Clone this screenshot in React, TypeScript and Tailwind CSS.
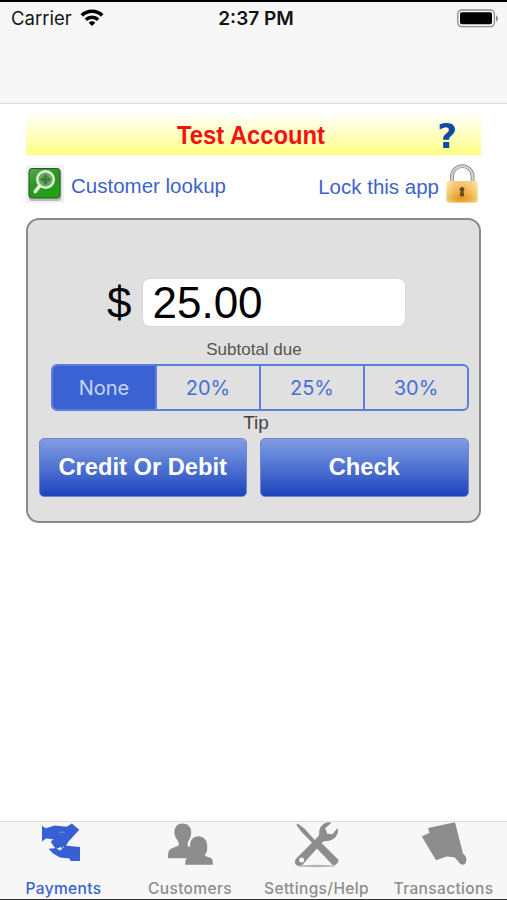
import { useState, type ReactNode } from "react";

const tips = ["None", "20%", "25%", "30%"];

function WifiIcon() {
  return (
    <svg width="24" height="18" viewBox="0 0 24 18" fill="none" stroke="#000" strokeWidth="3.6">
      <path d="M1.8 6.4a14.6 14.6 0 0 1 20.4 0" />
      <path d="M5.9 10.7a8.8 8.8 0 0 1 12.2 0" />
      <path d="M12 17l-3.300-3.300a4.700 4.700 0 0 1 6.600 0z" fill="#000" stroke="none" />
    </svg>
  );
}

function BatteryIcon() {
  return (
    <svg width="42" height="19" viewBox="0 0 42 19">
      <rect x="0.8" y="1" width="36.6" height="16.6" rx="4" fill="#f7f7f7" stroke="#8b8b8b" strokeWidth="1.3" />
      <rect x="3" y="3.3" width="32" height="12" rx="1.8" fill="#000" />
      <path d="M39 6.2c2.600 1 2.600 5.200 0 6.200z" fill="#8b8b8b" />
    </svg>
  );
}

function LookupIcon() {
  return (
    <svg width="38" height="38" viewBox="0 0 38 38">
      <defs>
        <linearGradient id="lookup" x1="0" y1="0" x2="0.6" y2="1">
          <stop offset="0" stopColor="#5aa94c" />
          <stop offset="0.5" stopColor="#2f9227" />
          <stop offset="1" stopColor="#23a312" />
        </linearGradient>
      </defs>
      <rect width="38" height="38" fill="#f1f1f1" />
      <rect x="2.5" y="4" width="33" height="32" rx="4" fill="#9a9a9a" opacity="0.6" />
      <rect x="3" y="3.5" width="31" height="29.5" rx="3" fill="url(#lookup)" stroke="#1f5f1c" />
      <circle cx="19.5" cy="14.5" r="8.3" fill="#6aaa62" stroke="#dcf0d4" strokeWidth="2.4" />
      <path d="M19.5 9.5v10M14.5 14.5h10" stroke="#35752f" strokeWidth="2" />
      <circle cx="19.5" cy="14.5" r="3.4" fill="none" stroke="#35752f" strokeWidth="0.8" />
      <path d="M13.5 21l-4.200 5.500" stroke="#e4f4dc" strokeWidth="3.6" strokeLinecap="round" />
    </svg>
  );
}

function LockIcon() {
  return (
    <svg width="32" height="40" viewBox="0 0 32 40">
      <defs>
        <linearGradient id="lockBody" x1="0" y1="0" x2="0" y2="1">
          <stop offset="0" stopColor="#fbe3a0" />
          <stop offset="0.5" stopColor="#f3bb4d" />
          <stop offset="0.8" stopColor="#e59a22" />
          <stop offset="1" stopColor="#f6b740" />
        </linearGradient>
        <linearGradient id="lockSide" x1="0" y1="0" x2="1" y2="0">
          <stop offset="0" stopColor="#fff3c8" stopOpacity="0.5" />
          <stop offset="0.45" stopColor="#e08a20" stopOpacity="0.25" />
          <stop offset="1" stopColor="#fff0b0" stopOpacity="0.6" />
        </linearGradient>
      </defs>
      <path d="M6 20V12.500a10.300 10.300 0 0 1 20.600 0V20" fill="none" stroke="#8f8f8f" strokeWidth="3.8" />
      <path d="M6 20V12.500a10.300 10.300 0 0 1 20.600 0V20" fill="none" stroke="#d2d2d2" strokeWidth="2" />
      <rect x="0.5" y="17" width="31" height="21.5" rx="2.5" fill="url(#lockBody)" />
      <rect x="0.5" y="17" width="31" height="21.5" rx="2.5" fill="url(#lockSide)" />
      <path d="M16 23a2.400 2.400 0 0 1 1.500 4.300l.8 5h-4.600l.8-5a2.400 2.400 0 0 1 1.500-4.300z" fill="#6b4a20" />
    </svg>
  );
}

function PaymentsIcon() {
  return (
    <svg width="40" height="40" viewBox="0 0 40 40" fill="currentColor">
      <path d="M1 2.800L4.800 5.300 14 2.400 25.700 3.700 30.800.6 38.300 6.800 27.500 18.500 25 22.500 31 23.200 39 24V38H29.700L28.500 35.500 19 34.500 12 30.500 7.600 25.700 14.200 25.200 9.700 18.700 12.300 16.300 5 15.600 1 18.400z" />
      <path d="M15.300 25.800l4.700-1.700 1.200 1.800-2.500 1.500-1.200-.9zM21.500 23.500l1.500.3-.5 1.400z" fill="#f7f7f7" />
      <path d="M18 10.500l3-1.500 2.500.4" fill="none" stroke="#86a0e6" strokeWidth="0.8" />
    </svg>
  );
}

function CustomersIcon() {
  return (
    <svg width="46" height="43" viewBox="0 0 46 43" fill="currentColor">
      <path d="M15.500.5c5 0 8.900 3.400 8.700 9 0 5-2.600 8-3.500 10v3.400l8 3.600v8.700H1c0-5 .4-7.800 2.500-9.200l8.200-3.500v-3.300C9 15.500 7.400 13 7.400 9c0-5.200 3.400-8.500 8.100-8.500z" />
      <path d="M31.200 13.200c5.500 0 9 4 9 9.300 0 4.500.2 6-1.400 8.200l-1.200 2 6 2.200c1.700.8 2.400 3 2.400 6.800H18.200c0-3.500.3-5.700 2.200-6.600l4.600-2.300-1.400-2.500c0-2-.6-3.800-.6-7.800 0-5.300 3.200-9.300 8.200-9.300z" />
    </svg>
  );
}

function SettingsIcon() {
  return (
    <svg width="44" height="46" viewBox="0 0 44 46">
      <path d="M1.300 2.700L2.600 1.500l7 5.300L20.600 19l-2.600 2.700L6.200 9.600z" fill="currentColor" />
      <path d="M20 24.500l5-5 18.200 18c1.500 2.200-3.200 7-5.600 5.500z" fill="currentColor" />
      <path d="M36.500.7c-4.800-2-12 2-12.300 9.300.1 2.200-.1 3.400-1 4.500L1 36.800c-3.300 4.300 1.700 9.700 6.300 6.200L27 20.800c1.500-1.400 3-1.900 5-1.700 7.300-.2 12.300-6.800 10.500-13.100l-5 6.200-5.300-.4-2-5.500z" fill="currentColor" />
      <circle cx="6.6" cy="38" r="2.5" fill="#f7f7f7" />
      <ellipse cx="22" cy="44" rx="19" ry="1.2" fill="#b5b5b5" />
    </svg>
  );
}

function TransactionsIcon() {
  return (
    <svg width="46" height="45" viewBox="0 0 46 45" fill="currentColor">
      <path d="M7 6L34 .3l8 31.200c3.500 3.300 4 5 3 8.300-.8 3-3.500 4-6.300 1.500l-5.200-6-8-.8-10.500 3.800L.8 14.600l7.700-3.900z" />
    </svg>
  );
}

type TabProps = { label: string; icon: ReactNode; active?: boolean; className: string; offset: string };

function Tab({ label, icon, active, className, offset }: TabProps) {
  return (
    <button
      type="button"
      className={`flex shrink-0 flex-col items-center ${className} ${active ? "text-[#3761d3]" : "text-[#8d8d8d]"}`}
    >
      <span className={`flex h-[57px] ${offset}`}>{icon}</span>
      <span className="font-[Inter,sans-serif] text-[15.5px] leading-5 font-medium tracking-[0.35px] whitespace-nowrap">
        {label}
      </span>
    </button>
  );
}

const payButton =
  "h-[59px] rounded-[5px] border border-[#6f86c8] bg-linear-to-b from-[#839de3] to-[#1f43bd] text-[23.7px] font-bold text-white";

export default function App() {
  const [tip, setTip] = useState("None");
  const [amount, setAmount] = useState("25.00");

  return (
    <div className="flex h-[900px] w-[507px] flex-col overflow-hidden border-t-2 border-b border-black border-b-[#333] bg-white font-['Liberation_Sans',Arial,sans-serif]">
      <header className="h-[102px] shrink-0 border-b border-[#dcdcdc] bg-[#f7f7f7]">
        <div className="grid h-8 grid-cols-[1fr_auto_1fr] items-center pr-2 pl-[11px] font-[Inter,sans-serif] text-[18.5px] text-[#111]">
          <div className="flex items-center gap-[8px]">
            <span className="pt-[2px]">Carrier</span>
            <WifiIcon />
          </div>
          <span className="pt-[2px] pl-[2px] text-[19px] font-semibold">2:37 PM</span>
          <div className="flex justify-end">
            <BatteryIcon />
          </div>
        </div>
      </header>

      <main className="flex flex-1 flex-col px-[26px] pt-[9px]">
        <div className="flex h-[42px] items-center bg-linear-to-b from-[#fffffa] to-[#ffff80] pr-[24px] pl-[151px]">
          <h1 className="w-[148px] origin-left scale-x-[0.915] pt-[2px] text-[26px] font-bold whitespace-nowrap text-[#f31212]">
            Test Account
          </h1>
          <button
            type="button"
            className="ml-auto origin-right pt-[5px] font-['DejaVu_Sans',sans-serif] text-[34px] leading-[37px] font-bold text-[#0b4ba3]"
          >
            ?
          </button>
        </div>

        <div className="mt-[9px] flex h-[40px] items-center text-[20.5px] text-[#3f62c9]">
          <LookupIcon />
          <span className="ml-[7px] pt-[4px]">Customer lookup</span>
          <span className="mr-[7px] ml-auto pt-[6px]">Lock this app</span>
          <LockIcon />
          <span className="w-[3px]" />
        </div>

        <section className="mt-[14px] flex h-[305px] flex-col items-center rounded-[13px] border-2 border-[#8a8a8a] bg-[#e0e0e0]">
          <div className="mt-[58px] flex w-full items-center pl-[79px] text-[44px] leading-[48px] text-black">
            <span>$</span>
            <input
              value={amount}
              onChange={(e) => setAmount(e.target.value)}
              className="ml-[11px] h-[49px] w-[264px] rounded-[8px] border border-[#d8d8d8] bg-white pl-[9px] outline-none"
            />
          </div>
          <p className="mt-[13px] pl-[1px] text-[17px] leading-5 text-[#555]">Subtotal due</p>
          <div className="mt-[4px] ml-[13px] flex h-[47px] w-[418px] divide-x-2 divide-[#5c7dd8] overflow-hidden rounded-[6px] border-2 border-[#5c7dd8] font-[Inter,sans-serif] text-[20px]">
            {tips.map((t) => (
              <button
                key={t}
                type="button"
                onClick={() => setTip(t)}
                className={`flex-1 ${t === tip ? "bg-[#3a62d3] text-[#c9d5f5]" : "text-[#4a6fd4]"}`}
              >
                {t}
              </button>
            ))}
          </div>
          <p className="mt-[1px] pl-[5px] text-[19px] leading-[22px] text-[#444]">Tip</p>
          <div className="mt-[4px] grid w-[430px] grid-cols-2 gap-[13px]">
            <button type="button" className={payButton}>Credit Or Debit</button>
            <button type="button" className={payButton}>Check</button>
          </div>
        </section>
      </main>

      <nav className="flex h-[78px] shrink-0 border-t border-[#dcdcdc] bg-[#f7f7f7]">
        <Tab label="Payments" icon={<PaymentsIcon />} active className="w-[127px]" offset="pt-[1px] -ml-[5px]" />
        <Tab label="Customers" icon={<CustomersIcon />} className="w-[126px]" offset="pt-[1px]" />
        <Tab label="Settings/Help" icon={<SettingsIcon />} className="w-[127px]" offset="" />
        <Tab label="Transactions" icon={<TransactionsIcon />} className="w-[127px]" offset="" />
      </nav>
    </div>
  );
}
